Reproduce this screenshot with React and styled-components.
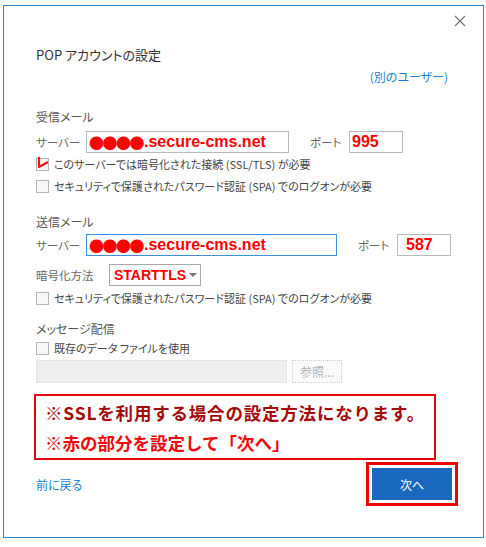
import React from "react";
import styled, { createGlobalStyle } from "styled-components";

const Global = createGlobalStyle`
body {
    margin: 0;
    background: #ffffff;
    font-family: "Noto Sans CJK JP", "Noto Sans", sans-serif;
    font-feature-settings: "palt";
}
`

const Window = styled.div`
box-sizing: border-box;
margin: 5px 0 0 3px;
width: 481px;
height: 533px;
border: 1px solid #2a86d4;
padding: 0 25px 0 32px;
display: flex;
flex-direction: column;
`

const TopBar = styled.div`
height: 30px;
margin-right: -8px;
display: flex;
justify-content: flex-end;
align-items: center;
`

const Close = styled.button`
border: none;
background: none;
padding: 0;
width: 12px;
height: 12px;
display: flex;
`

const Title = styled.h1`
margin: 9px 0 0;
font-size: 13px;
font-weight: 400;
line-height: 20px;
color: #333;
`

const OtherUser = styled.a`
margin-top: 3px;
align-self: flex-end;
margin-right: 10px;
font-size: 12px;
line-height: 18px;
color: #1a7fd0;
`

const Heading = styled.div`
margin-top: ${p => p.$top}px;
font-size: 12px;
line-height: 18px;
color: #555;
`

const Row = styled.div`
display: flex;
align-items: center;
margin-top: ${p => p.$top}px;
`

const Label = styled.span`
width: ${p => p.$w}px;
flex-shrink: 0;
font-size: 11.5px;
color: #666;
`

const Field = styled.div`
box-sizing: border-box;
width: ${p => p.$w}px;
height: 22px;
margin-left: ${p => p.$ml || 0}px;
border: 1px solid ${p => p.$focus ? "#3c8fe0" : "#b9b9b9"};
padding-left: ${p => p.$pad || 2}px;
display: flex;
align-items: center;
font-family: "Liberation Sans", Arial, sans-serif;
font-weight: 700;
font-size: 16px;
color: #ff0000;
white-space: nowrap;
`

const Dots = styled.span`
font-family: "Noto Sans CJK JP", sans-serif;
font-feature-settings: normal;
font-size: 15px;
letter-spacing: -1.5px;
margin-right: 1px;
`

const Select = styled.div`
box-sizing: border-box;
width: 92px;
height: 22px;
border: 1px solid #a9a9a9;
padding-left: 4px;
display: flex;
align-items: center;
gap: 3px;
font-family: "Liberation Sans", Arial, sans-serif;
font-weight: 700;
font-size: 14px;
color: #ff0000;
`

const Caret = styled.span`
width: 0;
height: 0;
border-left: 4px solid transparent;
border-right: 4px solid transparent;
border-top: 4px solid #777;
`

const Check = styled.label`
display: flex;
align-items: center;
gap: 5px;
height: 14px;
margin-top: ${p => p.$top}px;
font-size: 11px;
color: #444;
`

const Box = styled.span`
position: relative;
box-sizing: border-box;
width: 13px;
height: 13px;
border: 1px solid #b5b5b5;
background: #f7f7f7;
flex-shrink: 0;
`

const Mark = styled.svg`
position: absolute;
left: 0;
top: -2px;
overflow: visible;
`

const Disabled = styled.div`
box-sizing: border-box;
width: 251px;
height: 23px;
background: #eeeeee;
border: 1px solid #e2e2e2;
`

const Browse = styled.button`
box-sizing: border-box;
width: 50px;
height: 23px;
margin-left: 5px;
border: 1px dotted #cfcfcf;
background: #fbfbfb;
color: #b3b3b3;
font-family: inherit;
font-size: 12px;
padding: 0;
`

const Note = styled.div`
box-sizing: border-box;
margin: 11px 0 0 -2px;
width: 402px;
border: 2px solid #e8000d;
padding: 2px 0 0 9px;
font-weight: 700;
font-size: 17.5px;
line-height: 30px;
font-feature-settings: normal;
`

const NoteLine = styled.div`
color: ${p => p.$dark ? "#a50a0a" : "#ee0a0a"};
white-space: nowrap;
letter-spacing: ${p => p.$dark ? "0.8px" : "0"};
`

const Footer = styled.div`
margin-top: 2px;
display: flex;
justify-content: space-between;
align-items: center;
`

const Back = styled.a`
font-size: 12px;
color: #1a7fd0;
`

const Highlight = styled.div`
border: 3px solid #f00000;
padding: 3px;
background: #fff;
`

const Next = styled.button`
display: block;
width: 80px;
height: 32px;
border: none;
background: #1a68bd;
color: #fff;
font-family: inherit;
font-size: 12px;
padding: 0;
`

function CheckRow({ top, text, marked = false }) {
    return (
        <Check $top={top}>
            <Box>
                {marked && (
                    <Mark width="13" height="12" viewBox="0 0 13 12">
                        <polyline points="2,0 2,10 11,5" fill="none" stroke="#ee1111" strokeWidth="2.2" strokeLinejoin="round" />
                    </Mark>
                )}
            </Box>
            {text}
        </Check>
    )
}

function Host() {
    return <><Dots>●●●●</Dots>.secure-cms.net</>
}

export default function App() {
    return (
        <>
            <Global />
            <Window>
                <TopBar>
                    <Close aria-label="close">
                        <svg width="12" height="12" viewBox="0 0 12 12">
                            <path d="M1 1 L11 11 M11 1 L1 11" stroke="#6d6d6d" strokeWidth="1.1" />
                        </svg>
                    </Close>
                </TopBar>
                <Title>POP アカウントの設定</Title>
                <OtherUser>(別のユーザー)</OtherUser>

                <Heading $top={22}>受信メール</Heading>
                <Row $top={5}>
                    <Label $w={50}>サーバー</Label>
                    <Field $w={203}><Host /></Field>
                    <Label $w={39} style={{ marginLeft: 21 }}>ポート</Label>
                    <Field $w={54}>995</Field>
                </Row>
                <CheckRow top={4} marked text="このサーバーでは暗号化された接続 (SSL/TLS) が必要" />
                <CheckRow top={8} text="セキュリティで保護されたパスワード認証 (SPA) でのログオンが必要" />

                <Heading $top={20}>送信メール</Heading>
                <Row $top={3}>
                    <Label $w={50}>サーバー</Label>
                    <Field $w={251} $focus><Host /></Field>
                    <Label $w={39} style={{ marginLeft: 21 }}>ポート</Label>
                    <Field $w={54} $pad={8}>587</Field>
                </Row>
                <Row $top={8}>
                    <Label $w={73}>暗号化方法</Label>
                    <Select>STARTTLS<Caret /></Select>
                </Row>
                <CheckRow top={5} text="セキュリティで保護されたパスワード認証 (SPA) でのログオンが必要" />

                <Heading $top={15}>メッセージ配信</Heading>
                <CheckRow top={3} text="既存のデータ ファイルを使用" />
                <Row $top={5}>
                    <Disabled />
                    <Browse disabled>参照...</Browse>
                </Row>

                <Note>
                    <NoteLine $dark>※SSLを利用する場合の設定方法になります。</NoteLine>
                    <NoteLine>※赤の部分を設定して「次へ」</NoteLine>
                </Note>

                <Footer>
                    <Back>前に戻る</Back>
                    <Highlight>
                        <Next>次へ</Next>
                    </Highlight>
                </Footer>
            </Window>
        </>
    )
}
